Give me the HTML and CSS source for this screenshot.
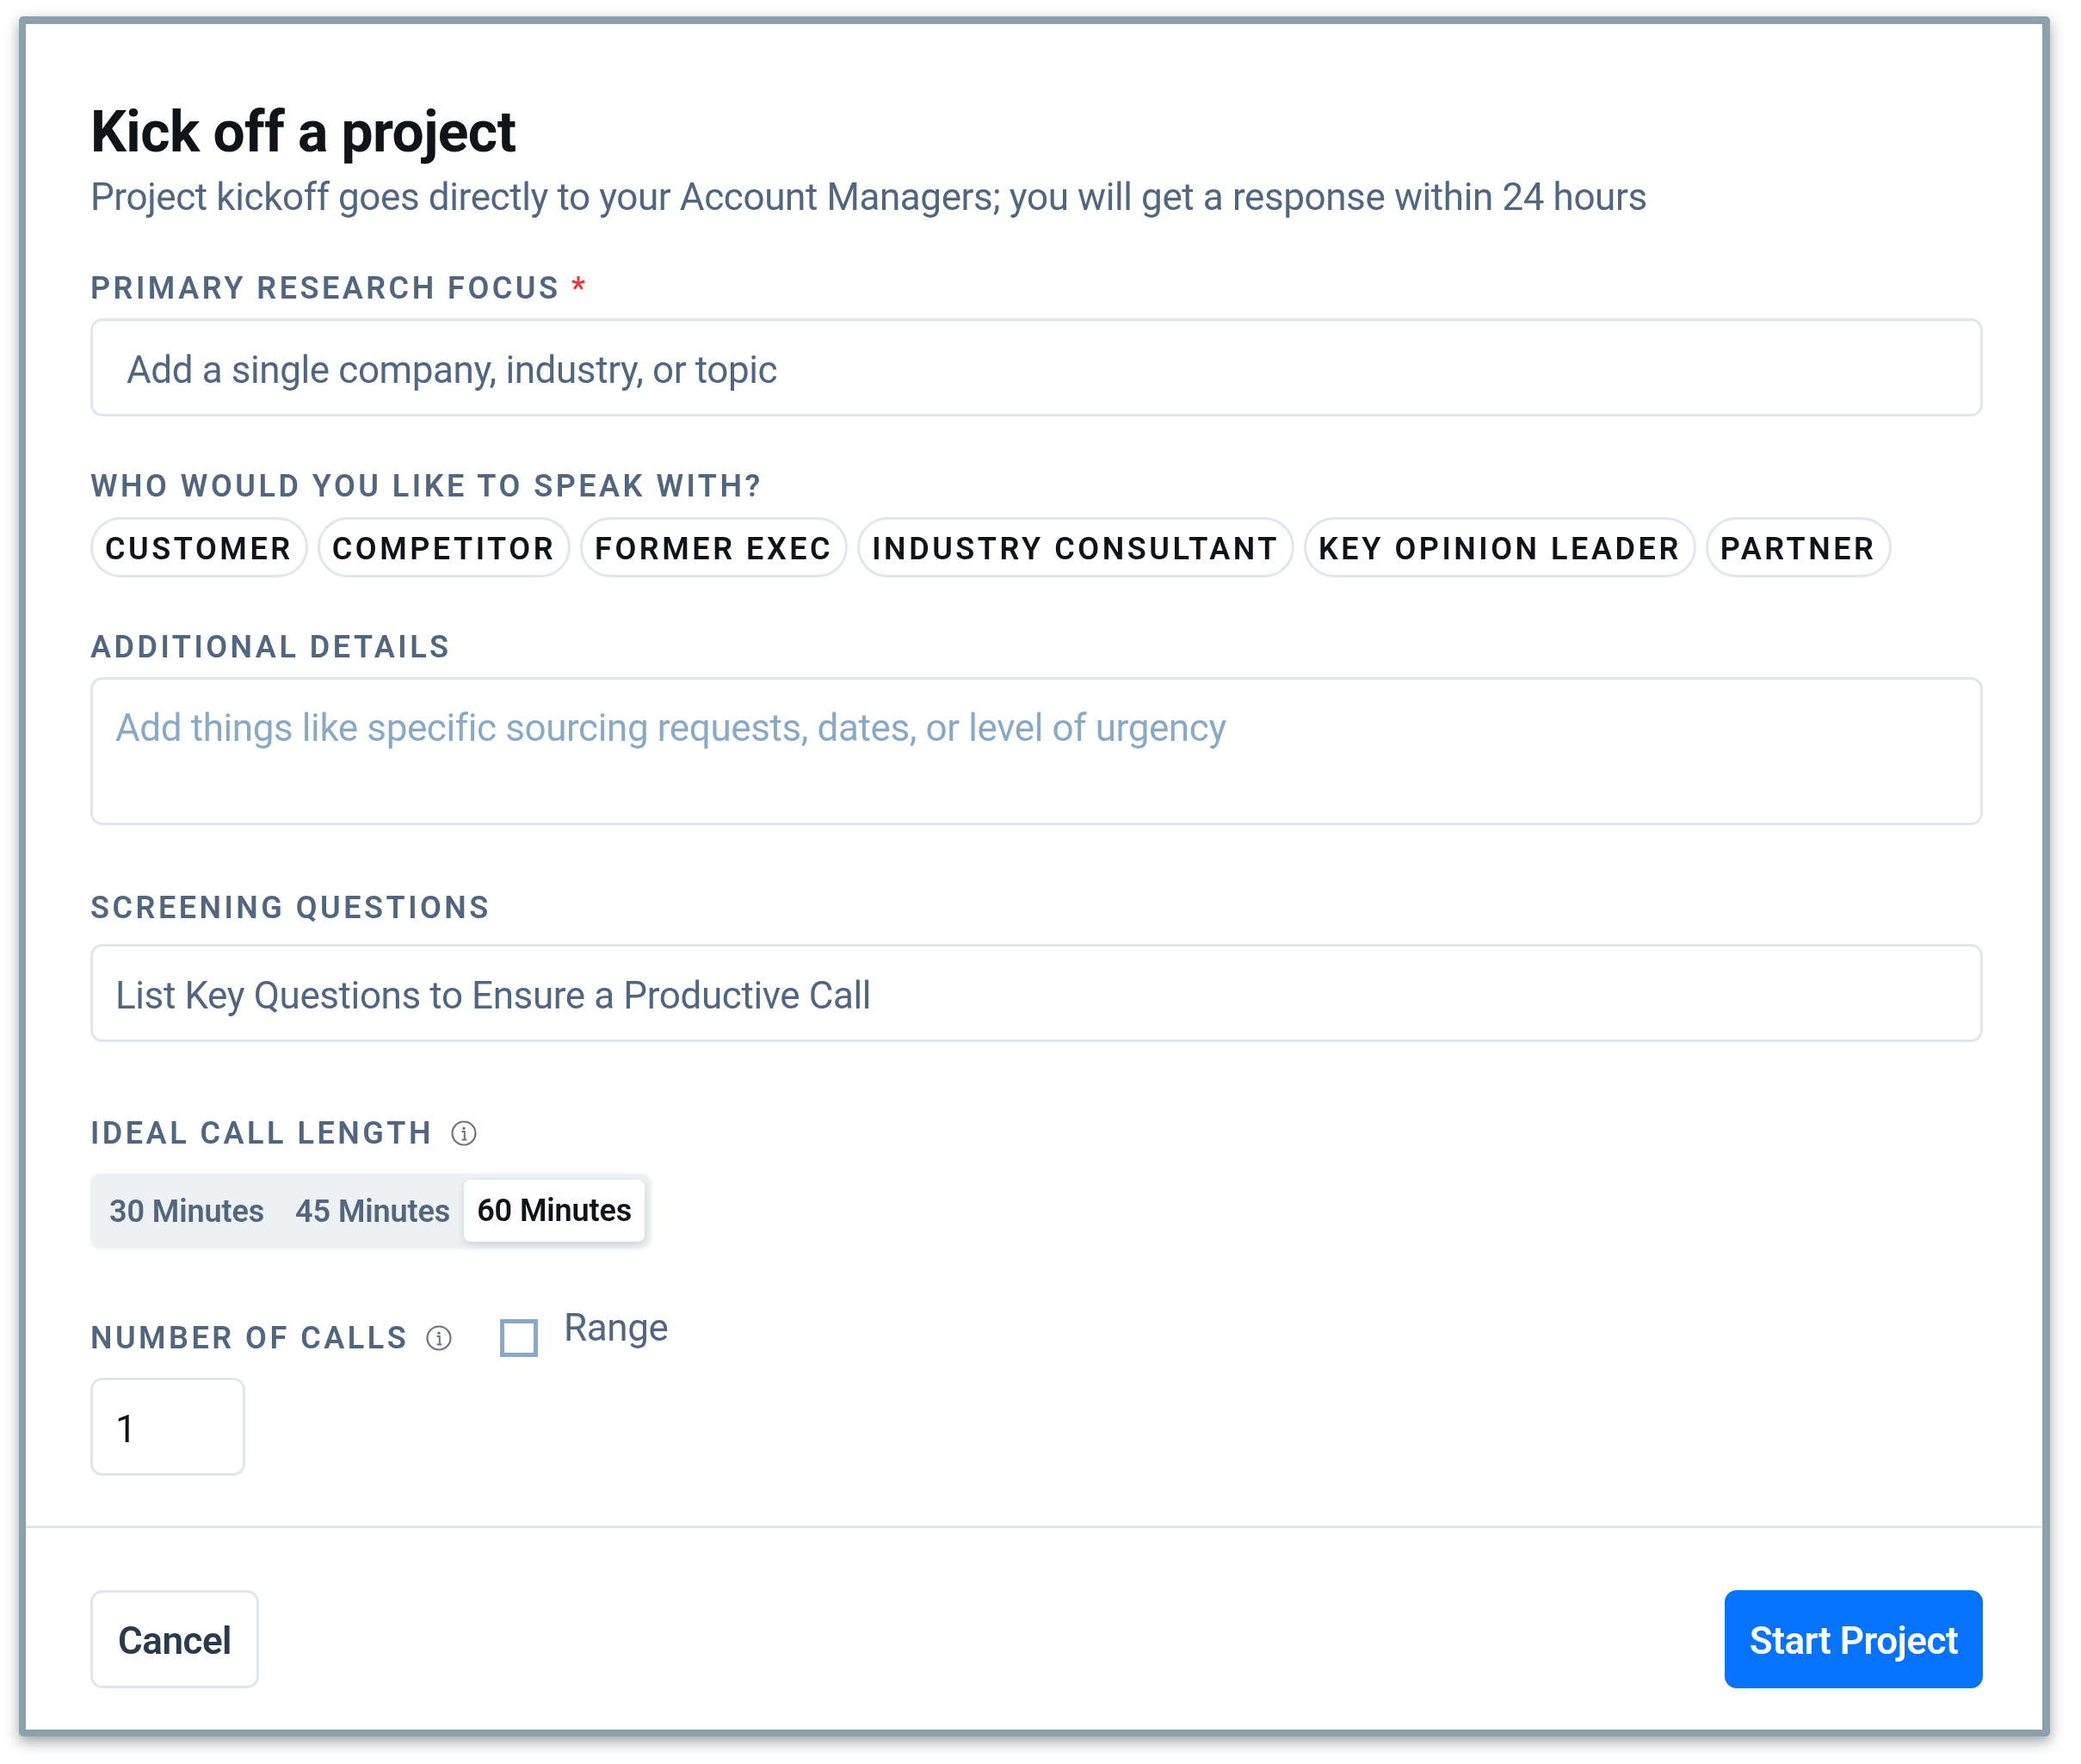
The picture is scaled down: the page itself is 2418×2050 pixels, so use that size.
FILE: index.html
```html
<!DOCTYPE html>
<html lang="en">
<head>
<meta charset="utf-8">
<title>Kick off a project</title>
<link rel="stylesheet" href="styles.css">
</head>
<body>
<main class="frame">
  <div class="content">
    <h1 class="title">Kick off a project</h1>
    <p class="subtitle">Project kickoff goes directly to your Account Managers; you will get a response within 24 hours</p>

    <div class="label label-focus">PRIMARY RESEARCH FOCUS <span class="req">*</span></div>
    <div class="input input-focus">Add a single company, industry, or topic</div>

    <div class="label label-who">WHO WOULD YOU LIKE TO SPEAK WITH?</div>
    <div class="chips">
      <span class="chip">CUSTOMER</span>
      <span class="chip">COMPETITOR</span>
      <span class="chip">FORMER EXEC</span>
      <span class="chip">INDUSTRY CONSULTANT</span>
      <span class="chip">KEY OPINION LEADER</span>
      <span class="chip">PARTNER</span>
    </div>

    <div class="label label-details">ADDITIONAL DETAILS</div>
    <div class="input textarea">Add things like specific sourcing requests, dates, or level of urgency</div>

    <div class="label label-screen">SCREENING QUESTIONS</div>
    <div class="input input-screen">List Key Questions to Ensure a Productive Call</div>

    <div class="label label-length label-row">IDEAL CALL LENGTH
      <svg class="info" viewBox="0 0 30 30" fill="none"><circle cx="15" cy="15" r="13.5" stroke="#6f7478" stroke-width="2.2"/><circle cx="15" cy="9.2" r="1.7" fill="#6f7478"/><path d="M12.6 13h3.2v9M12.6 22.4h5.6" stroke="#6f7478" stroke-width="2"/></svg>
    </div>
    <div class="segments">
      <span class="segment">30 Minutes</span>
      <span class="segment">45 Minutes</span>
      <span class="segment segment-on">60 Minutes</span>
    </div>

    <div class="calls-row">
      <div class="label label-row">NUMBER OF CALLS
        <svg class="info" viewBox="0 0 30 30" fill="none"><circle cx="15" cy="15" r="13.5" stroke="#6f7478" stroke-width="2.2"/><circle cx="15" cy="9.2" r="1.7" fill="#6f7478"/><path d="M12.6 13h3.2v9M12.6 22.4h5.6" stroke="#6f7478" stroke-width="2"/></svg>
      </div>
      <span class="checkbox"></span>
      <span class="range">Range</span>
    </div>
    <div class="input number">1</div>
  </div>

  <footer class="footer">
    <button class="btn btn-cancel" type="button">Cancel</button>
    <button class="btn btn-start" type="button">Start Project</button>
  </footer>
</main>
</body>
</html>
```
FILE: styles.css
```css
* { box-sizing: border-box; }
html, body { margin: 0; padding: 0; background: #fff; }
body { width: 2418px; height: 2050px; padding: 19px 36px 0 22px; font-family: Roboto, "Liberation Sans", sans-serif; overflow: hidden; }
.frame {
  width: 2360px; height: 1999px;
  background: #fff;
  border: solid #8ca1ae; border-width: 9px 9px 8px 8px;
  border-radius: 5px;
  box-shadow: 0 6px 16px rgba(40, 50, 60, .45);
  display: flex; flex-direction: column;
  filter: blur(.5px);
}
.content { flex: 1; padding: 0 69px 0 75px; }
.title { margin: 0; padding-top: 88px; font-size: 66px; line-height: 76px; font-weight: 700; color: #101418; letter-spacing: -.6px; }
.subtitle { margin: 11px 0 0; font-size: 44px; line-height: 52px; color: #52667f; letter-spacing: -.4px; }
.label { font-size: 36px; line-height: 40px; font-weight: 600; letter-spacing: 3.5px; color: #52667f; }
.label-focus { margin-top: 60px; }
.req { color: #f5333f; }
.input {
  height: 114px; margin-top: 13px; padding: 5px 26px 0;
  border: 3px solid #dfe7ed; border-radius: 14px;
  display: flex; align-items: center;
  font-size: 44px; color: #52667f; letter-spacing: -.4px;
}
.input-focus { padding-left: 39px; margin-top: 15px; }
.label-who { margin-top: 61px; }
.chips { display: flex; gap: 11px; margin-top: 16px; }
.chip {
  height: 70px; padding: 3px 14px 0;
  border: 3px solid #dfe7ed; border-radius: 35px;
  display: flex; align-items: center;
  font-size: 36px; font-weight: 600; letter-spacing: 3.55px; color: #101418;
}
.label-details { margin-top: 61px; }
.textarea { height: 172px; margin-top: 15px; align-items: flex-start; padding-top: 30px; color: #8aa9c4; }
.label-screen { margin-top: 76px; }
.input-screen { margin-top: 22px; }
.label-length { margin-top: 86px; }
.label-row { display: flex; align-items: center; gap: 20px; }
.info { width: 30px; height: 30px; }
.segments {
  display: inline-flex; align-items: center; margin-top: 27px;
  height: 86px; padding: 2px 7px 0 22px; gap: 36px;
  background: #edf1f4; border-radius: 12px;
  box-shadow: 0 1px 4px rgba(60, 80, 100, .12);
  font-size: 36px; font-weight: 600; letter-spacing: -.1px; color: #52667f;
}
.segment { white-space: nowrap; }
.segment-on {
  margin-top: -2px; margin-left: -20px; height: 72px; width: 210px;
  display: flex; align-items: center; justify-content: center;
  background: #fff; border-radius: 8px; color: #101418;
  box-shadow: 0 3px 8px rgba(60, 80, 100, .2);
}
.calls-row { display: flex; align-items: center; margin-top: 75px; height: 60px; }
.checkbox { width: 44px; height: 44px; margin-left: 56px; border: 5px solid #8aa9c7; }
.range { margin-left: 30px; font-size: 44px; color: #52667f; letter-spacing: -.4px; position: relative; top: -12px; }
.number { width: 180px; margin-top: 16px; color: #101418; }
.footer {
  height: 237px; padding: 72px 69px 0 75px;
  border-top: 3px solid #dfe7ed;
  display: flex; justify-content: space-between; align-items: flex-start;
}
.btn { height: 114px; border-radius: 14px; font-family: inherit; font-size: 44px; font-weight: 600; padding: 3px 0 0; letter-spacing: -.5px; }
.btn-cancel { width: 196px; background: #fff; border: 3px solid #dfe7ed; color: #2a3a4d; }
.btn-start { width: 300px; background: #0573ff; border: 0; color: #fff; }
```
